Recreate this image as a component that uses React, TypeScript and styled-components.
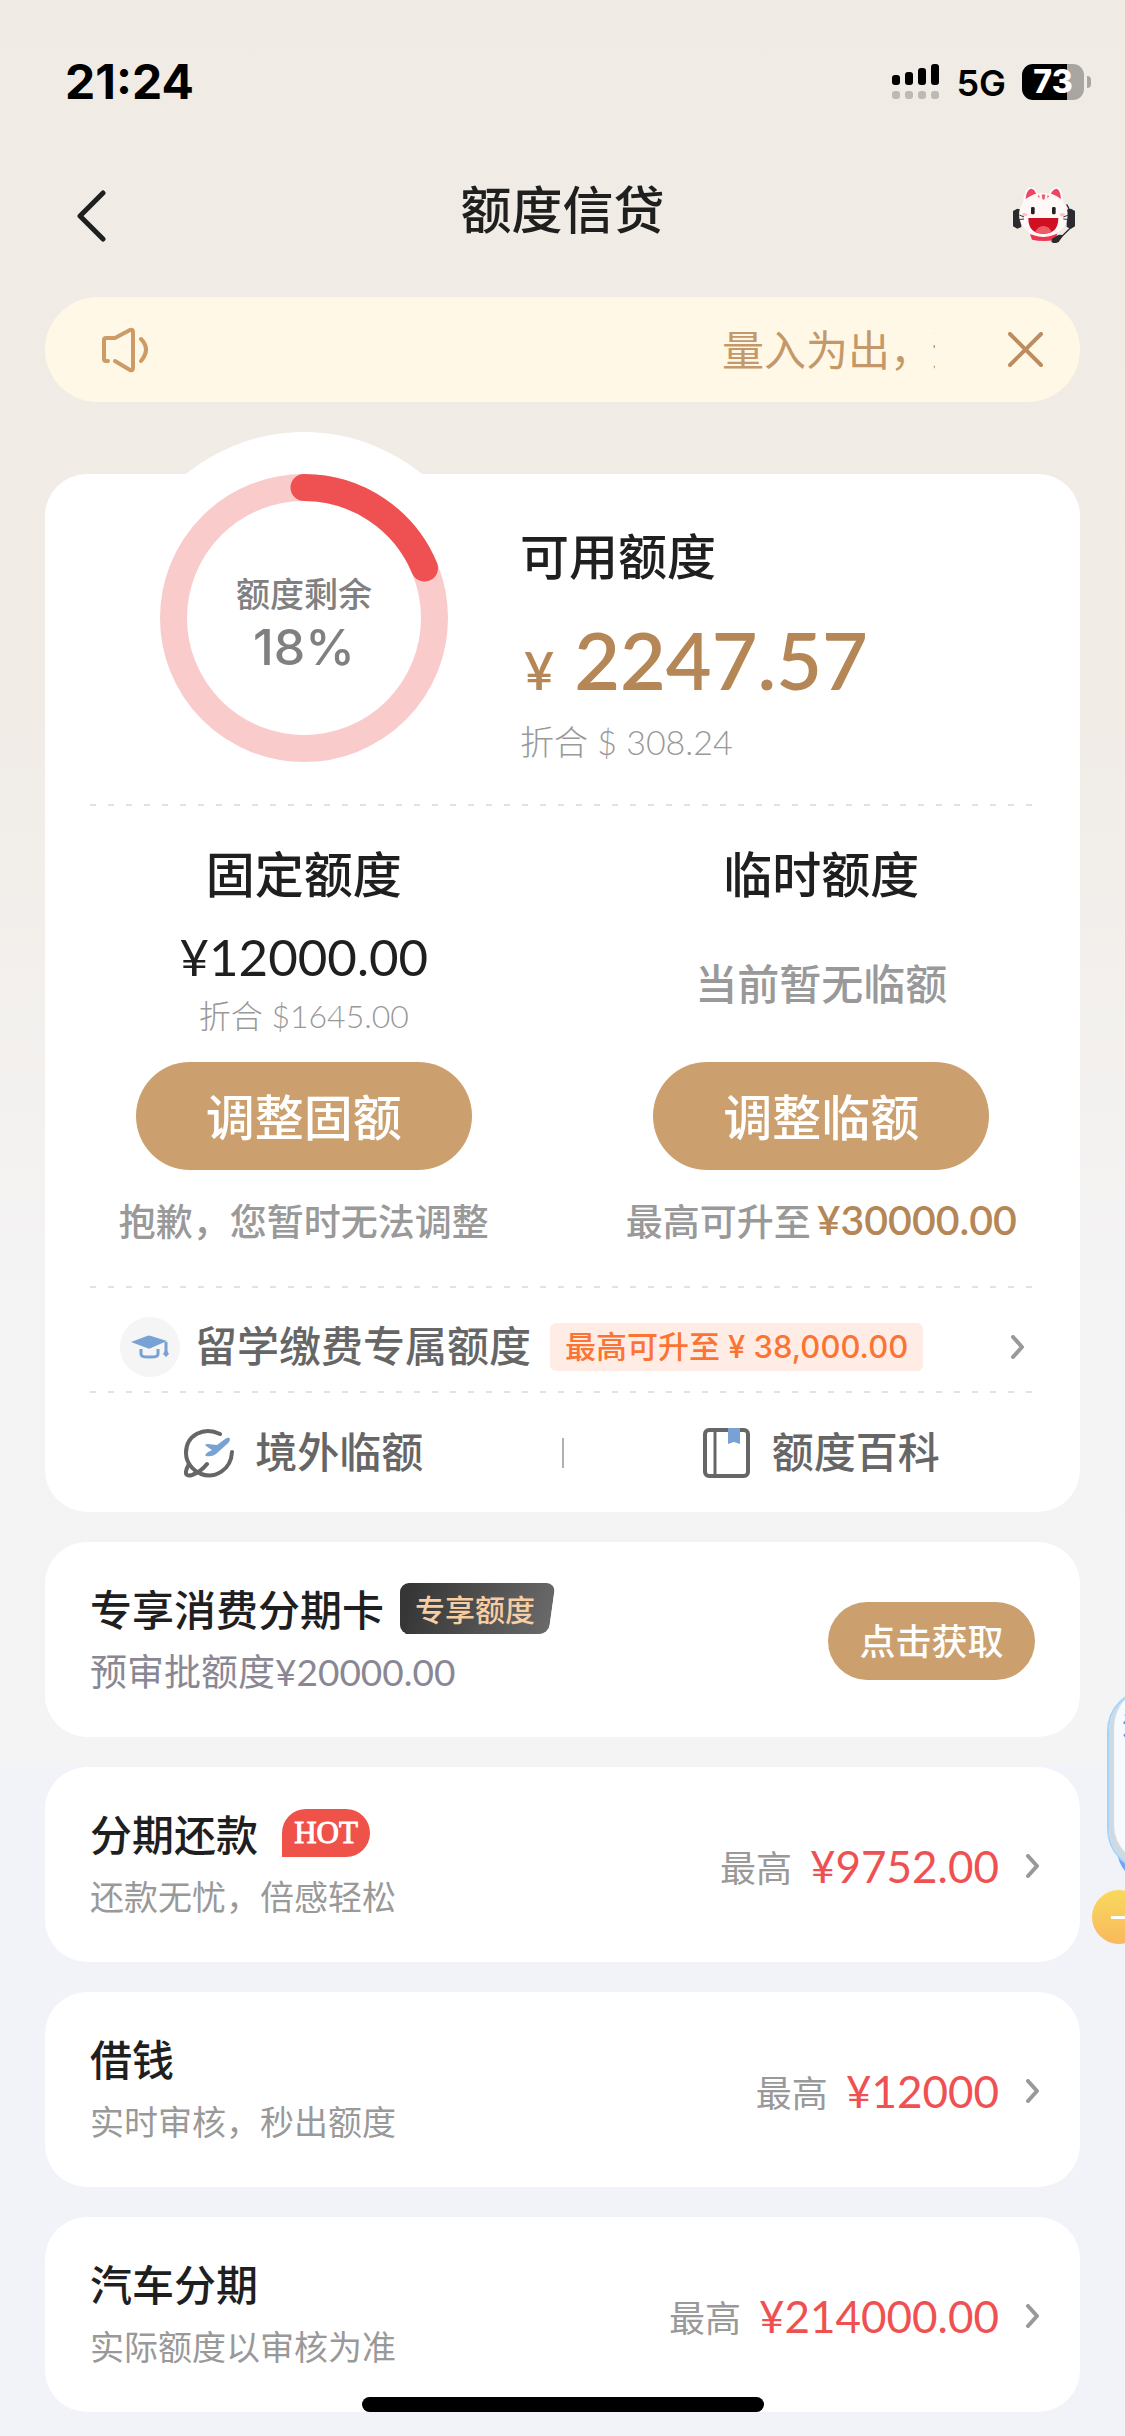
import React from "react";
import styled, { createGlobalStyle } from "styled-components";

const cjk = `"Noto Sans CJK SC", "Noto Sans", sans-serif`;
const latin = `Inter, "Noto Sans CJK SC", sans-serif`;
const figure = `Lato, "Noto Sans CJK SC", sans-serif`;

const color = {
  ink: "#1f1f1f",
  grey: "#999999",
  slate: "#666666",
  gold: "#cca06e",
  goldText: "#b58656",
  red: "#ef5152",
  blue: "#77a2d3",
};

const GlobalStyle = createGlobalStyle`
  *, *::before, *::after { box-sizing: border-box; }
  body { margin: 0; background: #f1f3f8; }
  h1, h2, p { margin: 0; font-weight: 500; }
  button { border: 0; padding: 0; margin: 0; background: none; font: inherit; color: inherit; cursor: pointer; }
  a { color: inherit; text-decoration: none; }
  svg { display: block; flex: none; }
`;

const Page = styled.div`
  position: relative;
  min-height: 100vh;
  overflow: hidden;
  padding-bottom: 24px;
  font-family: ${cjk};
  color: ${color.ink};
  background:
    linear-gradient(#f0ece5 0, #f1ece6 700px, #f4f3f3 1240px, #f4f4f4 1766px, transparent 1766px),
    #f1f3f8;
`;

const StatusBar = styled.div`
  display: flex;
  align-items: center;
  justify-content: space-between;
  height: 132px;
  padding: 32px 34px 0 65px;
  font-family: ${latin};
  color: #000;
`;

const Clock = styled.span`
  font-size: 48px;
  line-height: 54px;
  font-weight: 700;
`;

const StatusIcons = styled.div`
  display: flex;
  align-items: center;
  gap: 16px;
`;

const Network = styled.span`
  padding-top: 2px;
  font-size: 36px;
  line-height: 42px;
  font-weight: 600;
`;

const Battery = styled.span`
  display: flex;
  align-items: center;
  gap: 3px;
  &::after {
    content: "";
    width: 4px;
    height: 12px;
    border-radius: 0 6px 6px 0;
    background: #a9a6a1;
  }
`;

const BatteryBody = styled.span<{ $level: number }>`
  width: 62px;
  height: 36px;
  border-radius: 11px;
  background: linear-gradient(90deg, #000 ${(p) => p.$level}%, #a9a6a1 ${(p) => p.$level}%);
  color: #fff;
  font-size: 32px;
  line-height: 36px;
  font-weight: 800;
  text-align: center;
`;

const NavBar = styled.header`
  display: grid;
  grid-template-columns: 96px 1fr 96px;
  align-items: center;
  height: 165px;
  padding: 0 45px;
`;

const NavButton = styled.button<{ $end?: boolean }>`
  display: flex;
  justify-content: ${(p) => (p.$end ? "flex-end" : "flex-start")};
  padding: ${(p) => (p.$end ? "0 4px 0 0" : "3px 0 0 31px")};
`;

const PageTitle = styled.h1`
  font-size: 51px;
  line-height: 72px;
  padding-bottom: 16px;
  text-align: center;
`;

const Main = styled.main`
  display: flex;
  flex-direction: column;
  gap: 30px;
  padding: 0 45px;
`;

const Notice = styled.div`
  display: flex;
  align-items: center;
  height: 105px;
  margin-bottom: 42px;
  padding: 0 37px 0 56px;
  border-radius: 53px;
  background: #fff8e6;
  color: #c4986a;
`;

const NoticeTrack = styled.p`
  flex: 1;
  overflow: hidden;
  margin: 0 73px 0 60px;
  padding-bottom: 3px;
  font-size: 42px;
  line-height: 60px;
  font-weight: 400;
  white-space: nowrap;
`;

const NoticeText = styled.span`
  display: block;
  width: 213px;
  margin-left: auto;
`;

const Summary = styled.section`
  border-radius: 42px;
  background: #fff;
`;

const Available = styled.div`
  display: flex;
  gap: 72px;
  height: 330px;
  padding-left: 115px;
`;

const Gauge = styled.div`
  position: relative;
  display: grid;
  place-items: center;
  width: 288px;
  height: 288px;
  &::before {
    content: "";
    position: absolute;
    inset: -42px;
    border-radius: 50%;
    background: #fff;
  }
  svg {
    position: absolute;
    inset: 0;
  }
`;

const GaugeLabel = styled.div`
  position: relative;
  padding-top: 10px;
  text-align: center;
  font-size: 34px;
  line-height: 48px;
  font-weight: 500;
  color: #808080;
`;

const GaugeValue = styled.strong`
  display: block;
  font-family: ${latin};
  font-size: 50px;
  line-height: 60px;
  font-weight: 500;
`;

const AvailableInfo = styled.div`
  padding-top: 47px;
`;

const SectionTitle = styled.h2`
  font-size: 49px;
  line-height: 66px;
`;

const AvailableAmount = styled.p`
  display: flex;
  align-items: baseline;
  gap: 20px;
  margin: 25px 0 0;
  padding-left: 4px;
  font-family: ${figure};
  font-size: 79px;
  line-height: 96px;
  font-weight: 600;
  color: ${color.goldText};
`;

const Currency = styled.span`
  font-size: 52px;
`;

const Converted = styled.p<{ $small?: boolean }>`
  font-family: ${figure};
  font-size: ${(p) => (p.$small ? 32 : 34)}px;
  line-height: ${(p) => (p.$small ? 42 : 48)}px;
  font-weight: 300;
  color: ${color.grey};
`;

const Dashes = styled.hr`
  height: 2px;
  margin: 0 45px;
  border: 0;
  background: repeating-linear-gradient(90deg, #e2e2e2 0 6px, transparent 6px 18px);
`;

const Columns = styled.div`
  display: grid;
  grid-template-columns: 1fr 1fr;
`;

const Limit = styled.div`
  display: flex;
  flex-direction: column;
  align-items: center;
  padding: 33px 0 42px;
`;

const LimitBody = styled.div`
  display: flex;
  flex-direction: column;
  align-items: center;
  justify-content: center;
  gap: 8px;
  height: 111px;
  margin: 21px 0 25px;
`;

const LimitAmount = styled.p`
  font-family: ${figure};
  font-size: 51px;
  line-height: 60px;
  font-weight: 400;
`;

const LimitEmpty = styled.p`
  font-size: 42px;
  line-height: 60px;
  color: ${color.grey};
`;

const PillButton = styled.button<{ $small?: boolean }>`
  width: ${(p) => (p.$small ? 207 : 336)}px;
  height: ${(p) => (p.$small ? 78 : 108)}px;
  padding-bottom: 4px;
  border-radius: 54px;
  background: ${color.gold};
  color: #fff;
  font-size: ${(p) => (p.$small ? 36 : 49)}px;
  font-weight: 500;
`;

const Hint = styled.p`
  display: flex;
  align-items: center;
  gap: 6px;
  margin-top: 26px;
  font-size: 37px;
  line-height: 48px;
  color: ${color.grey};
`;

const HintAmount = styled.strong`
  font-family: ${figure};
  font-size: 41px;
  font-weight: 600;
  color: ${color.goldText};
`;

const StudyRow = styled.a`
  display: flex;
  align-items: center;
  height: 103px;
  padding: 14px 55px 0 75px;
  font-size: 42px;
  font-weight: 500;
  color: ${color.slate};
  > svg:last-child { margin-left: auto; }
`;

const EntryText = styled.span`
  padding-bottom: 5px;
  line-height: 60px;
`;

const IconDisc = styled.span`
  display: grid;
  place-items: center;
  width: 60px;
  height: 60px;
  margin-right: 15px;
  border-radius: 50%;
  background: #f5f5f5;
`;

const RaiseTag = styled.span`
  display: flex;
  gap: 8px;
  margin-left: 19px;
  padding: 0 15px;
  border-radius: 6px;
  background: #ffede5;
  color: #fc7433;
  font-family: ${latin};
  font-size: 31px;
  line-height: 48px;
`;

const ShortcutRow = styled(Columns)`
  height: 119px;
  align-items: center;
  > a + a::before {
    content: "";
    position: absolute;
    left: -1px;
    width: 2px;
    height: 30px;
    background: #b0b0b0;
  }
`;

const Shortcut = styled.a`
  position: relative;
  display: flex;
  align-items: center;
  justify-content: center;
  gap: 21px;
  font-size: 42px;
  font-weight: 500;
  color: ${color.slate};
`;

const Product = styled.section`
  display: flex;
  align-items: center;
  justify-content: space-between;
  height: 195px;
  padding: 2px 45px 0;
  border-radius: 42px;
  background: #fff;
`;

const ProductInfo = styled.div`
  padding-bottom: 7px;
`;

const ProductHead = styled.div`
  display: flex;
  align-items: center;
  height: 54px;
`;

const ProductTitle = styled.h2`
  font-size: 42px;
  line-height: 54px;
`;

const ProductNote = styled.p<{ $cool?: boolean }>`
  margin-top: 16px;
  font-family: ${figure};
  font-size: ${(p) => (p.$cool ? 37 : 34)}px;
  line-height: 42px;
  font-weight: 400;
  color: ${(p) => (p.$cool ? "#8a8794" : color.grey)};
`;

const ExclusiveTag = styled.span`
  position: relative;
  z-index: 0;
  margin-left: 16px;
  padding: 0 20px 0 15px;
  font-size: 30px;
  line-height: 51px;
  font-weight: 500;
  color: #f7cda2;
  &::before {
    content: "";
    position: absolute;
    z-index: -1;
    inset: 0 3px 0 0;
    border-radius: 9px;
    background: linear-gradient(100deg, #333, #6a6a6a);
    transform: skewX(-8deg);
    clip-path: inset(0 0 0 9px);
  }
  &::after {
    content: "";
    position: absolute;
    z-index: -2;
    inset: 0 40px 0 0;
    border-radius: 9px;
    background: #363636;
  }
`;

const HotTag = styled.span`
  width: 88px;
  height: 48px;
  margin-left: 24px;
  border-radius: 24px 24px 24px 0;
  background: #ef5249;
  color: #fff;
  font-family: "Liberation Serif", serif;
  font-size: 31px;
  line-height: 48px;
  font-weight: 400;
  -webkit-text-stroke: 1px #fff;
  text-align: center;
`;

const ProductLink = styled.a`
  display: flex;
  align-items: center;
  margin-right: -5px;
  font-size: 36px;
  line-height: 48px;
  font-weight: 400;
  color: ${color.grey};
`;

const ProductAmount = styled.span`
  margin: 0 27px 0 18px;
  font-family: ${figure};
  font-size: 44px;
  color: ${color.red};
`;

const Promo = styled.aside`
  position: absolute;
  top: 1689px;
  right: 0;
  width: 33px;
  height: 255px;
  overflow: hidden;
`;

const PromoCard = styled.a`
  position: absolute;
  top: 0;
  left: 15px;
  width: 150px;
  height: 182px;
  padding: 16px 0 0 13px;
  border: 2px solid #a5d4fa;
  border-radius: 42px;
  background: #f7faff;
  box-shadow: inset 5px -4px 1px #cfd9e2;
  color: #4c97e8;
  font-size: 27px;
  line-height: 36px;
  font-weight: 700;
`;

const PromoStem = styled.span`
  position: absolute;
  top: 160px;
  left: 25px;
  width: 60px;
  height: 34px;
  background: #6ea8f5;
  border-radius: 0 0 0 34px;
`;

const PromoClose = styled.button`
  position: absolute;
  left: 0;
  bottom: 0;
  width: 54px;
  height: 54px;
  border-radius: 50%;
  background: linear-gradient(#f8d95c, #f9b85e);
  &::before {
    content: "";
    position: absolute;
    left: 19px;
    top: 26px;
    width: 18px;
    height: 3px;
    background: #fff;
  }
`;

const HomeIndicator = styled.div`
  position: fixed;
  left: 50%;
  bottom: 24px;
  width: 402px;
  height: 15px;
  margin-left: -201px;
  border-radius: 8px;
  background: #000;
`;

const Chevron = () => (
  <svg width="14" height="24" viewBox="0 0 14 24" fill="none" stroke="#999" strokeWidth="4" strokeLinecap="round" strokeLinejoin="round">
    <path d="M2 2 11 12 2 22" />
  </svg>
);

const BackIcon = () => (
  <svg width="30" height="52" viewBox="0 0 30 52" fill="none" stroke="#1f1f1f" strokeWidth="5" strokeLinecap="round" strokeLinejoin="round">
    <path d="M27 3 4 26 27 49" />
  </svg>
);

const SignalIcon = () => (
  <svg width="48" height="36" viewBox="0 0 48 36">
    {[11, 8, 4, 0].map((top, i) => (
      <g key={top}>
        <rect x={i * 13} y={top} width="8" height={21 - top} rx="3" />
        <rect x={i * 13} y="27" width="8" height="8" rx="3" fill="#bdbab5" />
      </g>
    ))}
  </svg>
);

const CatIcon = () => (
  <svg width="64" height="56" viewBox="0 0 192 168">
    <path d="M3 72 16 65 28 68V120L16 125 3 118ZM189 72 177 65 164 68V120L177 125 189 118Z" fill="#2b2b2f" />
    <path d="M34 50C34 22 42 0 58 0 70 2 76 14 80 24H110C114 12 122 0 136 0 150 4 154 28 154 50Z" fill="#fffafa" />
    <path d="M41 36C42 18 49 6 58 5 67 7 70 14 72 20 60 24 50 30 41 36ZM147 36C146 18 141 6 133 5 124 7 119 14 117 20 128 24 139 29 147 36Z" fill="#ee4560" />
    <path d="M54 142Q94 152 136 140L130 158Q94 166 60 158Z" fill="#ee3650" />
    <ellipse cx="94" cy="84" rx="73" ry="66" fill="#fff8f7" />
    <path d="M89 24Q94 19 100 24L98 36Q95 41 91 36ZM76 27 82 25 82 34ZM112 27 106 25 106 34Z" fill="#ea6173" />
    <rect x="57" y="60" width="11" height="22" rx="4" fill="#222" />
    <rect x="120" y="60" width="11" height="22" rx="4" fill="#222" />
    <ellipse cx="38" cy="83" rx="8" ry="5" fill="#fbc3c6" />
    <ellipse cx="151" cy="83" rx="8" ry="5" fill="#fbc3c6" />
    <path d="M49 93H139Q139 140 94 140 49 140 49 93Z" fill="#cf1022" />
    <path d="M69 135Q78 117 94 117 111 117 119 135 94 146 69 135Z" fill="#f05b68" />
    <path d="M22 84 36 90M18 98 36 96M170 84 154 90M174 98 154 96" stroke="#333" strokeWidth="3" />
    <path d="M164 52Q178 70 176 122L150 148" fill="none" stroke="#2b2b2f" strokeWidth="4" />
    <path d="M120 155 139 144Q150 142 153 147L140 165Q128 172 118 165Z" fill="#2b2b2f" />
  </svg>
);

const SpeakerIcon = () => (
  <svg width="48" height="46" viewBox="0 0 48 46" fill="none" stroke="#cd9c66" strokeWidth="4" strokeLinecap="round" strokeLinejoin="round">
    <path d="M7 34H5Q3 34 3 32V13Q3 11 5 11H14L29 3Q32 2 32 5V41Q32 44 29 43L14 34" />
    <path d="M40 12Q50 22 40 34" />
  </svg>
);

const CloseIcon = () => (
  <svg width="35" height="35" viewBox="0 0 35 35" fill="none" stroke="#bb8d60" strokeWidth="4" strokeLinecap="round">
    <path d="M2 2 33 33M33 2 2 33" />
  </svg>
);

const CapIcon = () => (
  <svg width="38" height="24" viewBox="0 0 38 24">
    <path d="M0 7 16 1Q18 0 20 1L36 6 20 13Q18 14 16 13Z" fill={color.blue} />
    <path d="M10 14V19Q10 22 17 22H20Q27 22 27 19V14M35 7V17" fill="none" stroke={color.blue} strokeWidth="3" />
    <path d="M35 14 38 19 35 22 32 19Z" fill={color.blue} />
  </svg>
);

const GlobePlaneIcon = () => (
  <svg width="50" height="50" viewBox="0 0 50 50" fill="none" stroke={color.slate} strokeWidth="4" strokeLinecap="round" strokeLinejoin="round">
    <path d="M36 6C20-2 2 7 2 25 2 34 8 42 17 46 31 51 47 42 48 24" />
    <path d="M5 36C0 45 1 49 8 47 14 45 19 41 23 36" />
    <path d="M22 18Q20 16 24 16L33 17 41 11Q45 8 46 11 46 14 42 17L32 26Q28 29 22 28 20 27 24 24L28 22Z" fill={color.blue} stroke="none" />
  </svg>
);

const BookIcon = () => (
  <svg width="48" height="50" viewBox="0 0 48 50" fill="none" stroke={color.slate} strokeWidth="4">
    <rect x="2" y="2" width="43" height="46" rx="4" />
    <path d="M12 2V48" strokeWidth="3" />
    <path d="M25 0H37V16L31 14 25 16Z" fill={color.blue} stroke="none" />
  </svg>
);

const RADIUS = 130.5;
const LENGTH = 2 * Math.PI * RADIUS;

const GaugeRing = ({ ratio }: { ratio: number }) => (
  <svg width="288" height="288" viewBox="0 0 288 288" fill="none" strokeWidth="27">
    <circle cx="144" cy="144" r={RADIUS} stroke="#f9cbcb" />
    <circle
      cx="144"
      cy="144"
      r={RADIUS}
      stroke={color.red}
      strokeLinecap="round"
      strokeDasharray={`${LENGTH * ratio} ${LENGTH}`}
      transform="rotate(-90 144 144)"
    />
  </svg>
);

const products = [
  { title: "分期还款", hot: true, note: "还款无忧，倍感轻松", amount: "¥9752.00" },
  { title: "借钱", hot: false, note: "实时审核，秒出额度", amount: "¥12000" },
  { title: "汽车分期", hot: false, note: "实际额度以审核为准", amount: "¥214000.00" },
];

export default function App() {
  return (
    <Page lang="zh-CN">
      <GlobalStyle />
      <StatusBar>
        <Clock>21:24</Clock>
        <StatusIcons>
          <SignalIcon />
          <Network>5G</Network>
          <Battery>
            <BatteryBody $level={73}>73</BatteryBody>
          </Battery>
        </StatusIcons>
      </StatusBar>
      <NavBar>
        <NavButton aria-label="返回"><BackIcon /></NavButton>
        <PageTitle>额度信贷</PageTitle>
        <NavButton $end aria-label="客服"><CatIcon /></NavButton>
      </NavBar>
      <Main>
        <Notice>
          <SpeakerIcon />
          <NoticeTrack><NoticeText>量入为出，适度消费</NoticeText></NoticeTrack>
          <button aria-label="关闭"><CloseIcon /></button>
        </Notice>

        <Summary>
          <Available>
            <Gauge>
              <GaugeRing ratio={2247.57 / 12000} />
              <GaugeLabel>
                额度剩余
                <GaugeValue>18%</GaugeValue>
              </GaugeLabel>
            </Gauge>
            <AvailableInfo>
              <SectionTitle>可用额度</SectionTitle>
              <AvailableAmount><Currency>¥</Currency>2247.57</AvailableAmount>
              <Converted>折合 $ 308.24</Converted>
            </AvailableInfo>
          </Available>
          <Dashes />
          <Columns>
            <Limit>
              <SectionTitle>固定额度</SectionTitle>
              <LimitBody>
                <LimitAmount>¥12000.00</LimitAmount>
                <Converted $small>折合 $1645.00</Converted>
              </LimitBody>
              <PillButton>调整固额</PillButton>
              <Hint>抱歉，您暂时无法调整</Hint>
            </Limit>
            <Limit>
              <SectionTitle>临时额度</SectionTitle>
              <LimitBody>
                <LimitEmpty>当前暂无临额</LimitEmpty>
              </LimitBody>
              <PillButton>调整临额</PillButton>
              <Hint>最高可升至<HintAmount>¥30000.00</HintAmount></Hint>
            </Limit>
          </Columns>
          <Dashes />
          <StudyRow href="#study">
            <IconDisc><CapIcon /></IconDisc>
            <EntryText>留学缴费专属额度</EntryText>
            <RaiseTag><span>最高可升至</span><span>¥ 38,000.00</span></RaiseTag>
            <Chevron />
          </StudyRow>
          <Dashes />
          <ShortcutRow>
            <Shortcut href="#overseas"><GlobePlaneIcon /><EntryText>境外临额</EntryText></Shortcut>
            <Shortcut href="#guide"><BookIcon /><EntryText>额度百科</EntryText></Shortcut>
          </ShortcutRow>
        </Summary>

        <Product>
          <ProductInfo>
            <ProductHead>
              <ProductTitle>专享消费分期卡</ProductTitle>
              <ExclusiveTag>专享额度</ExclusiveTag>
            </ProductHead>
            <ProductNote $cool>预审批额度¥20000.00</ProductNote>
          </ProductInfo>
          <PillButton $small>点击获取</PillButton>
        </Product>

        {products.map((item) => (
          <Product key={item.title}>
            <ProductInfo>
              <ProductHead>
                <ProductTitle>{item.title}</ProductTitle>
                {item.hot && <HotTag>HOT</HotTag>}
              </ProductHead>
              <ProductNote>{item.note}</ProductNote>
            </ProductInfo>
            <ProductLink href="#apply">
              最高
              <ProductAmount>{item.amount}</ProductAmount>
              <Chevron />
            </ProductLink>
          </Product>
        ))}
      </Main>
      <Promo>
        <PromoStem />
        <PromoCard href="#promo">活动</PromoCard>
        <PromoClose aria-label="收起" />
      </Promo>
      <HomeIndicator />
    </Page>
  );
}
